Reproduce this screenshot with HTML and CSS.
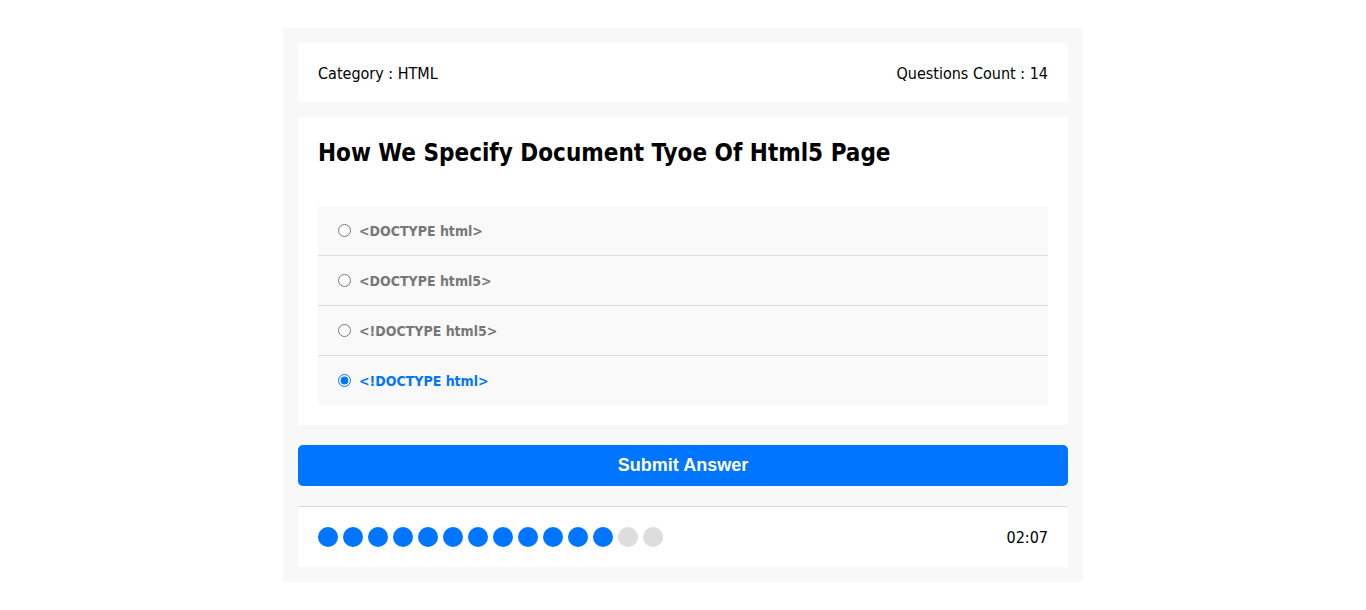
FILE: index.html
```html
<!DOCTYPE html>
<html>
<head>
<meta charset="utf-8">
<link rel="stylesheet" href="styles.css">
</head>
<body>
<div class="quiz">
  <div class="info">
    <div class="category">Category : <span>HTML</span></div>
    <div class="count">Questions Count : <span>14</span></div>
  </div>
  <div class="question">
    <h2 class="title">How We Specify Document Tyoe Of Html5 Page</h2>
    <div class="answers">
      <label class="answer"><input type="radio" name="q"><span>&lt;DOCTYPE html&gt;</span></label>
      <label class="answer"><input type="radio" name="q"><span>&lt;DOCTYPE html5&gt;</span></label>
      <label class="answer"><input type="radio" name="q"><span>&lt;!DOCTYPE html5&gt;</span></label>
      <label class="answer selected"><input type="radio" name="q" checked><span>&lt;!DOCTYPE html&gt;</span></label>
    </div>
  </div>
  <button class="submit">Submit Answer</button>
  <div class="footer">
    <div class="bullets">
      <span class="on"></span><span class="on"></span><span class="on"></span><span class="on"></span>
      <span class="on"></span><span class="on"></span><span class="on"></span><span class="on"></span>
      <span class="on"></span><span class="on"></span><span class="on"></span><span class="on"></span>
      <span></span><span></span>
    </div>
    <div class="timer">02:07</div>
  </div>
</div>
</body>
</html>
```
FILE: styles.css
```css
* { box-sizing: border-box; }
body {
  margin: 0;
  padding: 28px 0;
  background: #fff;
  font-family: "DejaVu Sans Condensed", "DejaVu Sans", sans-serif;
}
.quiz {
  width: 800px;
  margin: 0 auto;
  background: #f8f8f8;
  padding: 15px;
}
.info {
  background: #fff;
  padding: 21px 20px 19px;
  display: flex;
  justify-content: space-between;
  font-size: 16px;
  line-height: 19px;
  color: #000;
}
.question {
  background: #fff;
  margin-top: 15px;
  padding: 20px;
}
.title {
  margin: 0 0 37px;
  font-size: 24px;
  line-height: 32px;
  font-weight: bold;
  color: #000;
}
.answers {
  background: #f9f9f9;
}
.answer {
  display: flex;
  align-items: center;
  height: 50px;
  padding: 0 20px;
  border-bottom: 1px solid #dfdfdf;
  font-size: 14px;
  font-weight: bold;
  color: #777;
}
.answer:last-child { border-bottom: none; height: 49px; }
.answer input {
  margin: 0 8px 0 0;
  width: 13px;
  height: 13px;
  accent-color: #0075ff;
}
.answer.selected { color: #0075ff; }
.submit {
  display: block;
  width: 100%;
  margin-top: 20px;
  height: 41px;
  border: none;
  border-radius: 5px;
  background: #0075ff;
  color: #fff;
  font-family: "Liberation Sans", Arial, sans-serif;
  font-size: 18px;
  font-weight: bold;
}
.footer {
  margin-top: 20px;
  background: #fff;
  border-top: 1px solid #ddd;
  padding: 20px;
  display: flex;
  justify-content: space-between;
  align-items: center;
}
.bullets {
  display: flex;
  gap: 5px;
}
.bullets span {
  width: 20px;
  height: 20px;
  border-radius: 50%;
  background: #ddd;
}
.bullets span.on { background: #0075ff; }
.timer {
  font-size: 16px;
  color: #000;
}
```
